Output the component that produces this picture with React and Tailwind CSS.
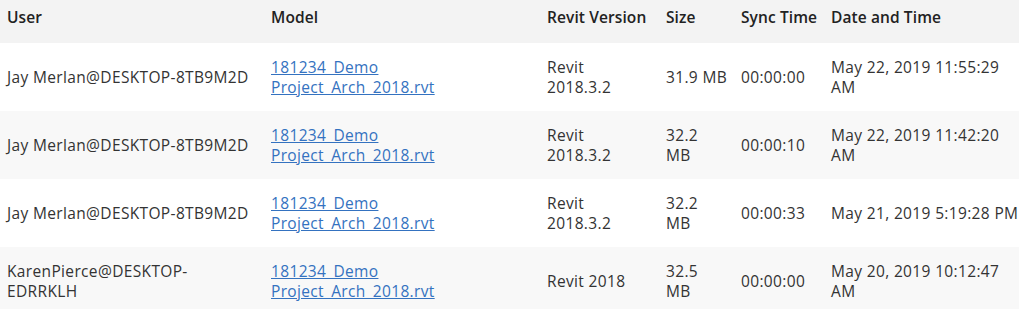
import React from 'react';

// line breaks follow the wrapping in the source table
const rows = [
  { user: 'Jay Merlan@DESKTOP-8TB9M2D', version: 'Revit\n2018.3.2', size: '31.9 MB', sync: '00:00:00', date: 'May 22, 2019 11:55:29\nAM' },
  { user: 'Jay Merlan@DESKTOP-8TB9M2D', version: 'Revit\n2018.3.2', size: '32.2\nMB', sync: '00:00:10', date: 'May 22, 2019 11:42:20\nAM' },
  { user: 'Jay Merlan@DESKTOP-8TB9M2D', version: 'Revit\n2018.3.2', size: '32.2\nMB', sync: '00:00:33', date: 'May 21, 2019 5:19:28 PM' },
  { user: 'KarenPierce@DESKTOP-\nEDRRKLH', version: 'Revit 2018', size: '32.5\nMB', sync: '00:00:00', date: 'May 20, 2019 10:12:47\nAM' },
];

const headers = ['User', 'Model', 'Revit Version', 'Size', 'Sync Time', 'Date and Time'];

export default function App() {
  return (
    <div className="w-[1019px] bg-white font-['Open_Sans',sans-serif] text-[15.5px] leading-[20px] tracking-[0.35px] text-[#333]">
      <table className="w-full table-fixed border-collapse">
        <colgroup>
          <col className="w-[264px]" />
          <col className="w-[276px]" />
          <col className="w-[119px]" />
          <col className="w-[75px]" />
          <col className="w-[90px]" />
          <col />
        </colgroup>
        <thead>
          <tr className="h-[43px] bg-[#f3f3f3]">
            {headers.map((h) => (
              <th key={h} className="px-[7px] pb-[9px] text-left font-semibold tracking-[0.1px] whitespace-nowrap text-[#222]">
                {h}
              </th>
            ))}
          </tr>
        </thead>
        <tbody>
          {rows.map((r, idx) => (
            <tr key={idx} className={`h-[68px] whitespace-pre ${idx % 2 === 1 ? 'bg-[#f8f8f8]' : 'bg-white'}`}>
              <td className="px-[7px] align-middle">{r.user}</td>
              <td className="px-[7px] align-middle">
                <a href="#" className="text-[#3472c0] underline">{'181234_Demo\nProject_Arch_2018.rvt'}</a>
              </td>
              <td className="px-[7px] align-middle">{r.version}</td>
              <td className="px-[7px] align-middle">{r.size}</td>
              <td className="px-[7px] align-middle">{r.sync}</td>
              <td className="px-[7px] align-middle">{r.date}</td>
            </tr>
          ))}
        </tbody>
      </table>
    </div>
  );
}
